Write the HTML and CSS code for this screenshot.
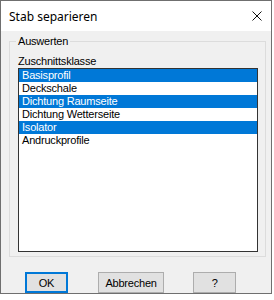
FILE: index.html
```html
<!DOCTYPE html>
<html lang="de">

<head>
    <meta charset="UTF-8">
    <title>Stab separieren</title>
    <link rel="stylesheet" href="styles.css">
</head>

<body>
    <!-- Dialog window -->
    <div class="window">
        <div class="titlebar">
            <span class="title">Stab separieren</span>
            <svg class="close" width="10" height="10" viewBox="0 0 10 10">
                <path d="M0.5 0.5 L9.5 9.5 M9.5 0.5 L0.5 9.5" stroke="#111" stroke-width="1" fill="none" />
            </svg>
        </div>

        <div class="dialog-body">
            <fieldset class="group">
                <legend>Auswerten</legend>
                <div class="field-label">Zuschnittsklasse</div>
                <ul class="listbox">
                    <li class="selected">Basisprofil</li>
                    <li>Deckschale</li>
                    <li class="selected">Dichtung Raumseite</li>
                    <li>Dichtung Wetterseite</li>
                    <li class="selected">Isolator</li>
                    <li>Andruckprofile</li>
                </ul>
            </fieldset>

            <div class="buttons">
                <button class="btn default">OK</button>
                <button class="btn wide">Abbrechen</button>
                <button class="btn">?</button>
            </div>
        </div>
    </div>
</body>

</html>
```

FILE: styles.css
```css
/* General */
body {
    margin: 0;
    background-color: #ffffff;
    font-family: "Liberation Sans", Arial, sans-serif;
    font-size: 11px;
    letter-spacing: -0.2px;
    color: #000000;
}

/* Window frame */
.window {
    width: 270px;
    height: 292px;
    border: 1px solid #6f6f6f;
    background-color: #f0f0f0;
    display: flex;
    flex-direction: column;
}

.titlebar {
    height: 30px;
    background-color: #ffffff;
    display: flex;
    align-items: center;
    justify-content: space-between;
    padding: 0 9px 0 8px;
}

.title {
    font-family: "Noto Sans", sans-serif;
    font-size: 12px;
    letter-spacing: 0;
}

.close {
    display: block;
}

/* Group box */
.dialog-body {
    padding: 3px 5px 0 8px;
}

.group {
    margin: 0;
    padding: 7px 7px 4px 8px;
    border: 1px solid #dcdcdc;
    min-width: 0;
}

.group legend {
    margin-left: -2px;
    padding: 0 2px;
    line-height: 14px;
}

.field-label {
    line-height: 13px;
}

/* List box */
.listbox {
    list-style: none;
    margin: 0;
    padding: 0;
    height: 182px;
    border: 1px solid #333333;
    background-color: #ffffff;
}

.listbox li {
    height: 13px;
    line-height: 13px;
    padding-left: 3px;
    white-space: nowrap;
}

.listbox li.selected {
    background-color: #0078d7;
    color: #ffffff;
}

/* Buttons */
.buttons {
    display: flex;
    margin-top: 15px;
    padding-left: 16px;
}

.btn {
    font-family: "Liberation Sans", Arial, sans-serif;
    font-size: 11px;
    letter-spacing: -0.2px;
    width: 47px;
    height: 21px;
    padding: 0;
    margin-right: 30px;
    background-color: #e1e1e1;
    border: 1px solid #adadad;
    color: #000000;
}

.btn.wide {
    width: 73px;
    margin-right: 29px;
}

.btn.default {
    border: 2px solid #0078d7;
}
```
